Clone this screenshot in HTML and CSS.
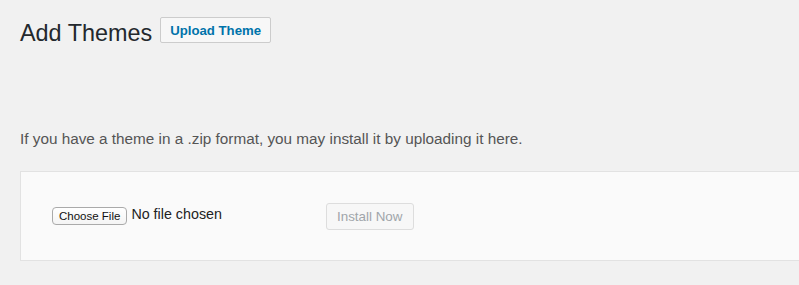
FILE: index.html
```html
<!DOCTYPE html>
<html lang="en">
<head>
  <meta charset="UTF-8">
  <title>Add Themes</title>
  <link rel="stylesheet" href="styles.css">
</head>
<body>
  <div class="wrap">
    <div class="page-head">
      <h1>Add Themes</h1>
      <button class="page-title-action">Upload Theme</button>
    </div>

    <p class="install-help">If you have a theme in a .zip format, you may install it by uploading it here.</p>

    <form class="upload-form">
      <div class="file-field">
        <span class="file-btn">Choose File</span>
        <span class="file-name">No file chosen</span>
      </div>
      <button type="button" class="button" disabled>Install Now</button>
    </form>
  </div>
</body>
</html>
```

FILE: styles.css
```css
* { box-sizing: border-box; margin: 0; padding: 0; }
body { background: #f1f1f1; color: #444; font-family: "Liberation Sans", Arial, sans-serif; font-size: 13px; overflow: hidden; }

.wrap { padding: 10px 0 0 20px; }

.page-head { display: flex; align-items: center; }
.page-head h1 { font-size: 23.4px; font-weight: 400; line-height: 29px; padding: 9px 0 4px; color: #23282d; }
.page-title-action {
  margin: 0 0 0 8px; padding: 0 9px; height: 26px; border: 1px solid #ccc; border-radius: 2px;
  background: #f7f7f7; color: #0073aa; font-family: inherit; font-size: 13.2px; font-weight: 700;
  position: relative; top: -1px;
}

.install-help { font-size: 15.3px; line-height: 20px; color: #555; margin-top: 77px; }

.upload-form {
  margin-top: 22px; background: #fafafa; border: 1px solid #e2e2e2; border-right: 0;
  padding: 31px 30px 30px; display: flex; align-items: center; height: 90px;
}
.file-field { display: flex; align-items: center; width: 275px; position: relative; top: -1px; }
.file-btn {
  font-size: 11.5px; color: #111; background: linear-gradient(#fff, #f4f4f4); border: 1px solid #aaa; border-radius: 4px;
  height: 18px; line-height: 16px; padding: 0 6px; margin-left: 1px;
}
.file-name { font-size: 14.3px; color: #222; margin-left: 4px; position: relative; top: -2px; }

.button {
  height: 27px; padding: 0 10px; border: 1px solid #ddd; border-radius: 3px; background: #f7f7f7;
  color: #a0a5aa; font-family: inherit; font-size: 13.4px;
}
```
